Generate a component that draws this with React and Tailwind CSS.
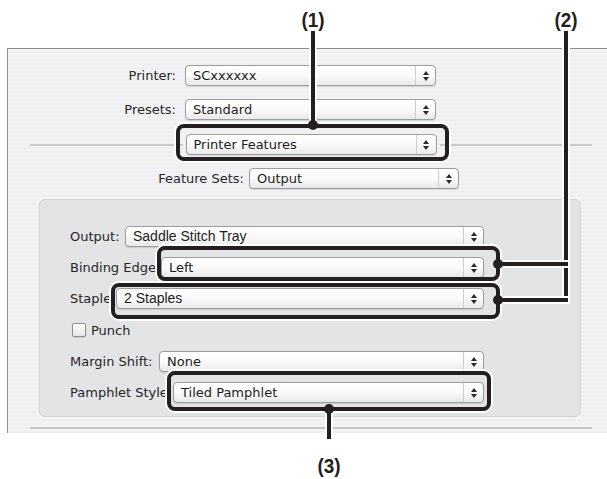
import React from 'react'

function Arrows() {
  return (
    <div className="w-[20px] border-l border-[#cdcdcd] flex flex-col items-center justify-center gap-[2px]">
      <svg width="6" height="4" viewBox="0 0 6 4"><polygon points="0,4 3,0 6,4" fill="#2a2a2a" /></svg>
      <svg width="6" height="4" viewBox="0 0 6 4"><polygon points="0,0 6,0 3,4" fill="#2a2a2a" /></svg>
    </div>
  )
}

function Select({ value, className = '', arial = false }) {
  return (
    <div className={`flex h-[21px] rounded-[4px] border border-[#9d9d9d] bg-gradient-to-b from-white via-[#fafafa] to-[#e9e9e9] shadow-[0_1px_1px_rgba(0,0,0,0.12)] ${className}`}>
      <div className={`flex-1 flex items-center pl-[7px] text-[#1c1c1c] whitespace-nowrap ${arial ? "font-['Liberation_Sans',sans-serif] text-[14px]" : 'text-[13px]'}`}>
        {value}
      </div>
      <Arrows />
    </div>
  )
}

function PanelRow({ label, labelW, value, arial }) {
  return (
    <div className="flex items-center">
      <span className={`shrink-0 whitespace-nowrap leading-none text-[13px] text-[#262626] ${labelW}`}>{label}</span>
      <Select value={value} arial={arial} className="flex-1" />
    </div>
  )
}

function Num({ n, className }) {
  return (
    <div className={`absolute w-[40px] text-center font-['Liberation_Sans',sans-serif] font-bold text-[21px] leading-none scale-x-90 text-[#231f20] ${className}`}>
      ({n})
    </div>
  )
}

function Callouts() {
  return (
    <>
      <Num n="1" className="left-[293px] top-[9px]" />
      <Num n="2" className="left-[546px] top-[9px]" />
      <Num n="3" className="left-[309px] top-[455px]" />

      {/* (1) */}
      <div className="absolute left-[311px] top-[31px] w-[4px] h-[94px] bg-[#231f20] shadow-[0_0_0_2px_white]" />
      <div className="absolute left-[176px] top-[124px] w-[273px] h-[37px] rounded-[8px] border-4 border-[#231f20] shadow-[0_0_0_2px_white]" />
      <div className="absolute left-[308px] top-[120px] w-[10px] h-[10px] rounded-full bg-[#231f20]" />

      {/* (2) */}
      <div className="absolute left-[564px] top-[31px] w-[4px] h-[271px] bg-[#231f20] shadow-[0_0_0_2px_white]" />
      <div className="absolute left-[498px] top-[262px] w-[70px] h-[4px] bg-[#231f20] shadow-[0_0_0_2px_white]" />
      <div className="absolute left-[498px] top-[298px] w-[70px] h-[4px] bg-[#231f20] shadow-[0_0_0_2px_white]" />
      <div className="absolute left-[157px] top-[246px] w-[343px] h-[35px] rounded-[8px] border-4 border-[#231f20] shadow-[0_0_0_2px_white]" />
      <div className="absolute left-[111px] top-[283px] w-[389px] h-[36px] rounded-[8px] border-4 border-[#231f20] shadow-[0_0_0_2px_white]" />
      <div className="absolute left-[493px] top-[259px] w-[10px] h-[10px] rounded-full bg-[#231f20]" />
      <div className="absolute left-[493px] top-[295px] w-[10px] h-[10px] rounded-full bg-[#231f20]" />

      {/* (3) */}
      <div className="absolute left-[167px] top-[371px] w-[324px] h-[40px] rounded-[8px] border-4 border-[#231f20] shadow-[0_0_0_2px_white]" />
      <div className="absolute left-[327px] top-[409px] w-[4px] h-[30px] bg-[#231f20] shadow-[0_0_0_2px_white]" />
      <div className="absolute left-[324px] top-[404px] w-[10px] h-[10px] rounded-full bg-[#231f20]" />
    </>
  )
}

export default function App() {
  return (
    <div className="relative w-[607px] h-[479px] bg-white overflow-hidden font-['DejaVu_Sans',sans-serif] pt-[48px]">
      <div className="ml-[7px] h-[385px] border-l border-t border-[#8e8e8e] bg-[repeating-linear-gradient(0deg,#efeff1_0px,#efeff1_2px,#f3f3f5_2px,#f3f3f5_4px)] pt-[16px] flex flex-col">
        <div className="flex flex-col gap-[13px]">
          <div className="flex items-center gap-[9px]">
            <span className="w-[168px] text-right leading-none text-[13px] text-[#262626]">Printer:</span>
            <Select value="SCxxxxxx" className="w-[251px]" />
          </div>
          <div className="flex items-center gap-[9px]">
            <span className="w-[168px] text-right leading-none text-[13px] text-[#262626]">Presets:</span>
            <Select value="Standard" className="w-[251px]" />
          </div>
          <div className="flex items-center gap-[3px] pl-[22px] pr-[15px] mt-[1px]">
            <div className="flex-1 h-[2px] bg-[#c9c9cb]" />
            <Select value="Printer Features" className="w-[251px]" />
            <div className="flex-1 h-[2px] bg-[#c9c9cb]" />
          </div>
          <div className="flex items-center gap-[5px]">
            <span className="w-[236px] text-right leading-none text-[13px] text-[#262626]">Feature Sets:</span>
            <Select value="Output" className="w-[210px]" />
          </div>
        </div>

        <div className="ml-[31px] mt-[10px] w-[542px] h-[218px] rounded-[6px] border border-[#d2d2d4] bg-[#e4e4e6] pt-[26px] pl-[30px] pr-[96px] flex flex-col gap-[10px]">
          <PanelRow label="Output:" labelW="w-[55px]" value="Saddle Stitch Tray" arial />
          <PanelRow label="Binding Edge:" labelW="w-[91px]" value="Left" />
          <PanelRow label="Staple:" labelW="w-[46px]" value="2 Staples" arial />
          <div className="flex items-center gap-[5px] h-[14px] my-[4px] ml-[2px]">
            <div className="w-[14px] h-[14px] rounded-[2px] border border-[#8d8d8d] bg-gradient-to-b from-white to-[#e6e6e6] shadow-[0_1px_1px_rgba(0,0,0,0.12)]" />
            <span className="leading-none text-[13px] text-[#262626]">Punch</span>
          </div>
          <PanelRow label="Margin Shift:" labelW="w-[89px]" value="None" />
          <PanelRow label="Pamphlet Style:" labelW="w-[103px]" value="Tiled Pamphlet" />
        </div>

        <div className="ml-[22px] mr-[15px] mt-[10px] h-[2px] bg-[#c6c6c8]" />
      </div>

      <Callouts />
    </div>
  )
}
